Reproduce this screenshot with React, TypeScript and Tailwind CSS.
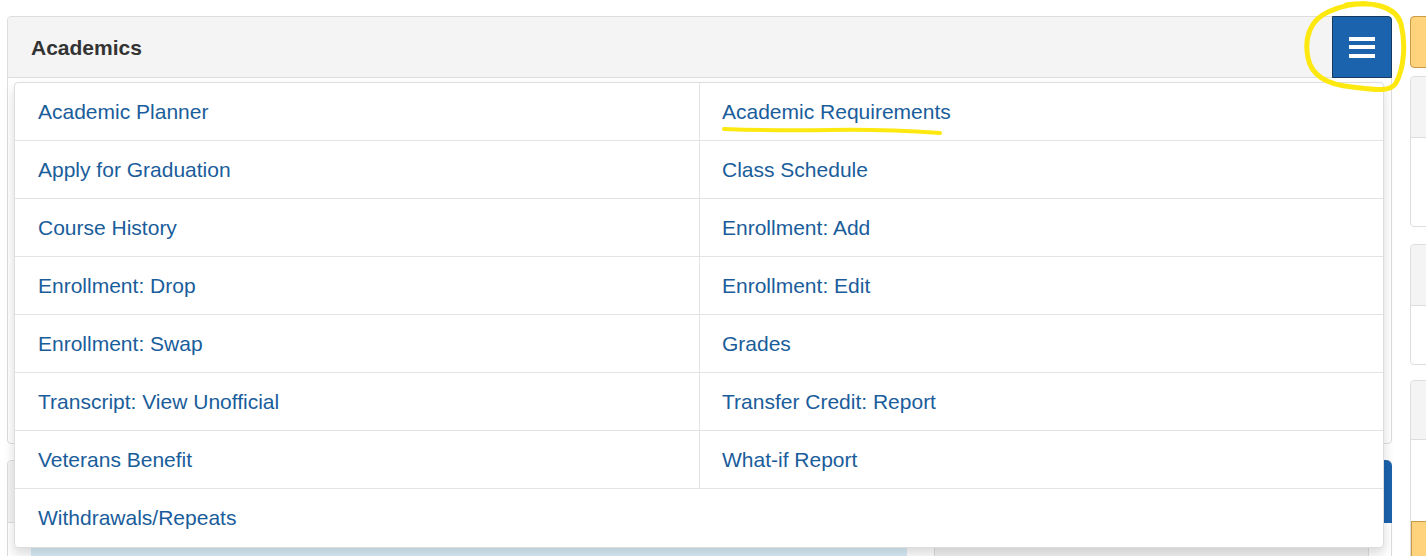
import React from 'react';

const links: [string, string | null][] = [
    ['Academic Planner', 'Academic Requirements'],
    ['Apply for Graduation', 'Class Schedule'],
    ['Course History', 'Enrollment: Add'],
    ['Enrollment: Drop', 'Enrollment: Edit'],
    ['Enrollment: Swap', 'Grades'],
    ['Transcript: View Unofficial', 'Transfer Credit: Report'],
    ['Veterans Benefit', 'What-if Report'],
    ['Withdrawals/Repeats', null],
];

function MenuButton() {
    return (
        <div className="w-[60px] h-[62px] -mt-px -mr-px bg-[#1b63ad] border border-[#17395f] rounded-tr-[4px] flex flex-col items-center justify-center gap-[4.5px]">
            <span className="block w-[26px] h-[4px] bg-white" />
            <span className="block w-[26px] h-[4px] bg-white" />
            <span className="block w-[26px] h-[4px] bg-white" />
        </div>
    );
}

export default function App() {
    return (
        <div
            className="relative w-[1426px] h-[556px] overflow-hidden bg-white flex items-start pt-[16px] pl-[7px]"
            style={{ fontFamily: '"Liberation Sans", Arial, sans-serif' }}
        >
            {/* main column */}
            <div className="w-[1385px] shrink-0 flex flex-col">
                <div className="h-[428px] shrink-0 border border-[#ddd] rounded-[4px] bg-white flex flex-col">
                    <div className="h-[61px] shrink-0 bg-[#f4f4f4] border-b border-[#ddd] rounded-t-[4px] flex items-start justify-between">
                        <h2 className="pl-[23px] pt-[15px] text-[21px] font-bold text-[#333]">Academics</h2>
                        <MenuButton />
                    </div>
                </div>

                <div className="mt-[16px] h-[200px] shrink-0 border border-[#ddd] rounded-[4px] bg-white flex flex-col">
                    <div className="h-[62px] shrink-0 bg-[#f4f4f4] border-b border-[#ddd] rounded-t-[4px] flex justify-end">
                        <div className="w-[60px] h-[63px] -mt-px -mr-px bg-[#1b63ad] rounded-tr-[6px]" />
                    </div>
                    <div className="flex pl-[23px] pt-[16px]">
                        <div className="w-[876px] h-[60px] bg-[#d9edf7]" />
                        <div className="ml-[27px] w-[435px] h-[60px] border-l border-r border-[#ddd] bg-[#f3f3f3]" />
                    </div>
                </div>
            </div>

            {/* right column */}
            <div className="ml-[18px] w-[200px] shrink-0 flex flex-col">
                <div className="h-[52px] shrink-0 bg-[#fed37c] border border-[#c99a48] rounded-[4px]" />
                <div className="mt-[8px] h-[151px] shrink-0 border border-[#ddd] rounded-[4px] bg-white">
                    <div className="h-[61px] bg-[#f4f4f4] border-b border-[#ddd] rounded-t-[4px]" />
                </div>
                <div className="mt-[17px] h-[121px] shrink-0 border border-[#ddd] rounded-[4px] bg-white">
                    <div className="h-[61px] bg-[#f4f4f4] border-b border-[#ddd] rounded-t-[4px]" />
                </div>
                <div className="mt-[15px] h-[200px] shrink-0 border border-[#ddd] rounded-[4px] bg-white">
                    <div className="h-[59px] bg-[#f4f4f4] border-b border-[#ddd] rounded-t-[4px]" />
                    <div className="mt-[81px] h-[60px] bg-[#fed37c] border border-[#c99a48]" />
                </div>
            </div>

            {/* dropdown menu */}
            <div className="absolute left-[14px] top-[82px] w-[1370px] bg-white border border-[#ddd] rounded-[4px] shadow-[0_6px_12px_rgba(0,0,0,0.15)]">
                {links.map(([a, b], i) => (
                    <div
                        key={a}
                        className={`flex h-[58px] ${i < links.length - 1 ? 'border-b border-[#e3e3e3]' : ''}`}
                    >
                        <div
                            className={`w-[685px] flex items-center pl-[23px] text-[21px] text-[#1a5d9b] ${b ? 'border-r border-[#e3e3e3]' : ''}`}
                        >
                            {a}
                        </div>
                        {b && (
                            <div className="flex-1 flex items-center pl-[22px] text-[21px] text-[#1a5d9b]">{b}</div>
                        )}
                    </div>
                ))}
            </div>

            {/* yellow annotations */}
            <svg className="absolute left-0 top-0 pointer-events-none" width="1426" height="556" viewBox="0 0 1426 556">
                <path
                    d="M1346 5 C1372 1 1396 6 1401 24 C1406 44 1404 68 1396 83 C1390 93 1372 89 1352 87 C1330 85 1312 78 1308 58 C1304 38 1310 20 1328 12 C1340 6 1356 3 1368 4"
                    fill="none"
                    stroke="#fde910"
                    strokeWidth="5"
                    strokeLinecap="round"
                />
                <path
                    d="M724 129 Q 780 131 830 130 T 940 133"
                    fill="none"
                    stroke="#fde910"
                    strokeWidth="4"
                    strokeLinecap="round"
                />
            </svg>
        </div>
    );
}
